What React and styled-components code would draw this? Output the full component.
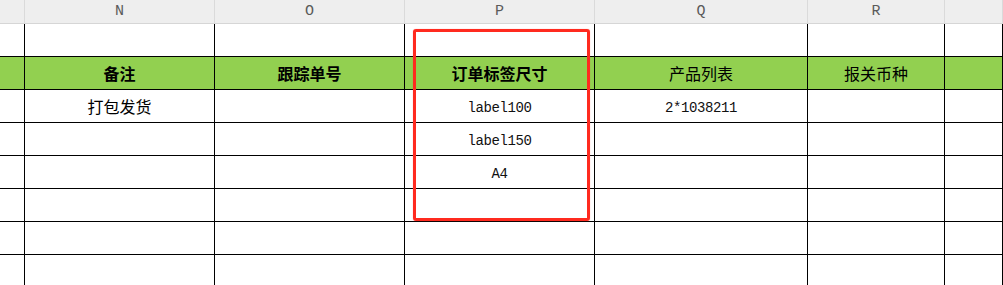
import React from 'react';
import styled, { createGlobalStyle } from 'styled-components';

const GlobalStyle = createGlobalStyle`
    html, body {
        margin: 0;
        padding: 0;
        background: #FFFFFF;
    }
`;

const COLUMNS = ['', 'N', 'O', 'P', 'Q', 'R', ''];
const WIDTHS = '25px 190px 190px 190px 213px 137px 1fr';

const HEADINGS = [
    { text: '' },
    { text: '备注', bold: true },
    { text: '跟踪单号', bold: true },
    { text: '订单标签尺寸', bold: true },
    { text: '产品列表' },
    { text: '报关币种' },
    { text: '' },
];

const ROWS = [
    ['', '打包发货', '', 'label100', '2*1038211', '', ''],
    ['', '', '', 'label150', '', '', ''],
    ['', '', '', 'A4', '', '', ''],
    ['', '', '', '', '', '', ''],
    ['', '', '', '', '', '', ''],
    ['', '', '', '', '', '', ''],
];

const isLatin = (s) => /^[\x00-\x7F]+$/.test(s);

const Sheet = styled.div`
    position: relative;
    width: 1003px;
    height: 285px;
    overflow: hidden;
    display: grid;
    grid-template-columns: ${WIDTHS};
    grid-auto-rows: 33px;
    grid-template-rows: 24px;
    font-family: "Noto Sans CJK SC", "Liberation Sans", sans-serif;
    color: #000000;
`;

const ColHead = styled.div`
    box-sizing: border-box;
    background-color: #EEEEEE;
    border-right: 1px solid #DADADA;
    border-bottom: 1px solid #D6D6D6;
    display: flex;
    align-items: center;
    justify-content: center;
    font-family: "Liberation Mono", monospace;
    font-size: 15px;
    color: #5A5A5A;
`;

const Cell = styled.div`
    box-sizing: border-box;
    border-right: 1px solid #000000;
    border-bottom: 1px solid #000000;
    background-color: ${({ $green }) => ($green ? '#92D050' : '#FFFFFF')};
    display: flex;
    align-items: center;
    justify-content: center;
    font-size: 16px;
    font-weight: ${({ $bold }) => ($bold ? 700 : 400)};
    white-space: nowrap;
    overflow: hidden;
`;

const Mono = styled.span`
    font-family: "Liberation Mono", monospace;
    font-size: 14px;
    letter-spacing: -0.4px;
    padding-top: 3px;
    color: #111111;
`;

// red selection frame drawn over column P
const Highlight = styled.div`
    position: absolute;
    left: 413px;
    top: 29px;
    width: 177px;
    height: 192px;
    box-sizing: border-box;
    border: 3px solid #FF2A1F;
    border-radius: 3px;
    box-shadow: 0 0 1px rgba(255, 60, 60, 0.6);
    pointer-events: none;
`;

const CellText = ({ value }) => (isLatin(value) ? <Mono>{value}</Mono> : value);

const App = () => {
    return (
        <>
            <GlobalStyle />
            <Sheet>
                {COLUMNS.map((c, i) => (
                    <ColHead key={`h${i}`}>{c}</ColHead>
                ))}
                {COLUMNS.map((_, i) => (
                    <Cell key={`b${i}`} />
                ))}
                {HEADINGS.map((h, i) => (
                    <Cell key={`g${i}`} $green $bold={h.bold}>{h.text}</Cell>
                ))}
                {ROWS.map((row, r) =>
                    row.map((v, i) => (
                        <Cell key={`r${r}-${i}`}>{v && <CellText value={v} />}</Cell>
                    ))
                )}
                <Highlight />
            </Sheet>
        </>
    );
};

export default App;
